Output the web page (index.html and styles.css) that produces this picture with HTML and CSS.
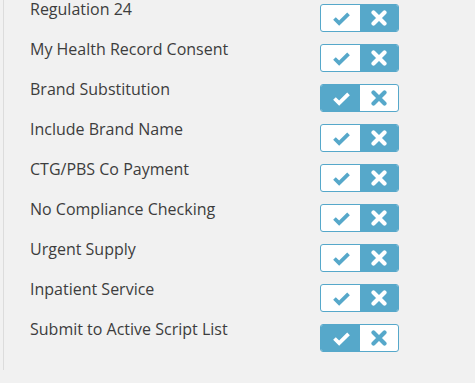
FILE: index.html
```html
<!DOCTYPE html>
<html lang="en">
<head>
  <meta charset="UTF-8">
  <meta name="viewport" content="width=device-width, initial-scale=1.0">
  <title>Script Options</title>
  <link rel="stylesheet" href="styles.css">
</head>
<body>
  <div class="panel">
    <div class="row">
      <span class="label">Regulation 24</span>
      <div class="toggle no">
        <span class="half yes-side"><svg viewBox="0 0 20 16"><polyline points="2.5,8 7.5,13 17.5,3"/></svg></span>
        <span class="half no-side"><svg viewBox="0 0 16 16"><path d="M2.5 2.5 L13.5 13.5 M13.5 2.5 L2.5 13.5"/></svg></span>
      </div>
    </div>
    <div class="row">
      <span class="label">My Health Record Consent</span>
      <div class="toggle no">
        <span class="half yes-side"><svg viewBox="0 0 20 16"><polyline points="2.5,8 7.5,13 17.5,3"/></svg></span>
        <span class="half no-side"><svg viewBox="0 0 16 16"><path d="M2.5 2.5 L13.5 13.5 M13.5 2.5 L2.5 13.5"/></svg></span>
      </div>
    </div>
    <div class="row">
      <span class="label">Brand Substitution</span>
      <div class="toggle yes">
        <span class="half yes-side"><svg viewBox="0 0 20 16"><polyline points="2.5,8 7.5,13 17.5,3"/></svg></span>
        <span class="half no-side"><svg viewBox="0 0 16 16"><path d="M2.5 2.5 L13.5 13.5 M13.5 2.5 L2.5 13.5"/></svg></span>
      </div>
    </div>
    <div class="row">
      <span class="label">Include Brand Name</span>
      <div class="toggle no">
        <span class="half yes-side"><svg viewBox="0 0 20 16"><polyline points="2.5,8 7.5,13 17.5,3"/></svg></span>
        <span class="half no-side"><svg viewBox="0 0 16 16"><path d="M2.5 2.5 L13.5 13.5 M13.5 2.5 L2.5 13.5"/></svg></span>
      </div>
    </div>
    <div class="row">
      <span class="label">CTG/PBS Co Payment</span>
      <div class="toggle no">
        <span class="half yes-side"><svg viewBox="0 0 20 16"><polyline points="2.5,8 7.5,13 17.5,3"/></svg></span>
        <span class="half no-side"><svg viewBox="0 0 16 16"><path d="M2.5 2.5 L13.5 13.5 M13.5 2.5 L2.5 13.5"/></svg></span>
      </div>
    </div>
    <div class="row">
      <span class="label">No Compliance Checking</span>
      <div class="toggle no">
        <span class="half yes-side"><svg viewBox="0 0 20 16"><polyline points="2.5,8 7.5,13 17.5,3"/></svg></span>
        <span class="half no-side"><svg viewBox="0 0 16 16"><path d="M2.5 2.5 L13.5 13.5 M13.5 2.5 L2.5 13.5"/></svg></span>
      </div>
    </div>
    <div class="row">
      <span class="label">Urgent Supply</span>
      <div class="toggle no">
        <span class="half yes-side"><svg viewBox="0 0 20 16"><polyline points="2.5,8 7.5,13 17.5,3"/></svg></span>
        <span class="half no-side"><svg viewBox="0 0 16 16"><path d="M2.5 2.5 L13.5 13.5 M13.5 2.5 L2.5 13.5"/></svg></span>
      </div>
    </div>
    <div class="row">
      <span class="label">Inpatient Service</span>
      <div class="toggle no">
        <span class="half yes-side"><svg viewBox="0 0 20 16"><polyline points="2.5,8 7.5,13 17.5,3"/></svg></span>
        <span class="half no-side"><svg viewBox="0 0 16 16"><path d="M2.5 2.5 L13.5 13.5 M13.5 2.5 L2.5 13.5"/></svg></span>
      </div>
    </div>
    <div class="row">
      <span class="label">Submit to Active Script List</span>
      <div class="toggle yes">
        <span class="half yes-side"><svg viewBox="0 0 20 16"><polyline points="2.5,8 7.5,13 17.5,3"/></svg></span>
        <span class="half no-side"><svg viewBox="0 0 16 16"><path d="M2.5 2.5 L13.5 13.5 M13.5 2.5 L2.5 13.5"/></svg></span>
      </div>
    </div>
  </div>
</body>
</html>
```

FILE: styles.css
```css
html, body {
  margin: 0;
  background: #f1f1f1;
}
body {
  font-family: 'Open Sans', 'Liberation Sans', sans-serif;
  font-size: 16px;
  color: #3d3d3d;
}
.panel {
  margin-left: 3px;
  padding: 0 0 10px 26px;
  border-left: 1px solid #dcdcdc;
}
.row {
  display: flex;
  height: 40px;
}
.label {
  width: 290px;
  line-height: 18px;
}
.toggle {
  display: flex;
  margin-top: 4px;
  width: 77px;
  height: 26px;
  border: 1px solid #56a8ca;
  border-radius: 3px;
  overflow: hidden;
  background: #fff;
}
.half {
  flex: 1;
  display: flex;
  align-items: center;
  justify-content: center;
}
.half svg {
  fill: none;
  stroke-linejoin: miter;
}
.yes-side svg {
  width: 19px;
  height: 15px;
  margin-left: 3px;
  stroke-width: 4;
}
.no-side svg {
  width: 16px;
  height: 16px;
  stroke-width: 4.2;
  stroke-linecap: round;
}
.no .no-side,
.yes .yes-side {
  background: #56a8ca;
  stroke: #fff;
}
.no .yes-side,
.yes .no-side {
  stroke: #56a8ca;
}
```
